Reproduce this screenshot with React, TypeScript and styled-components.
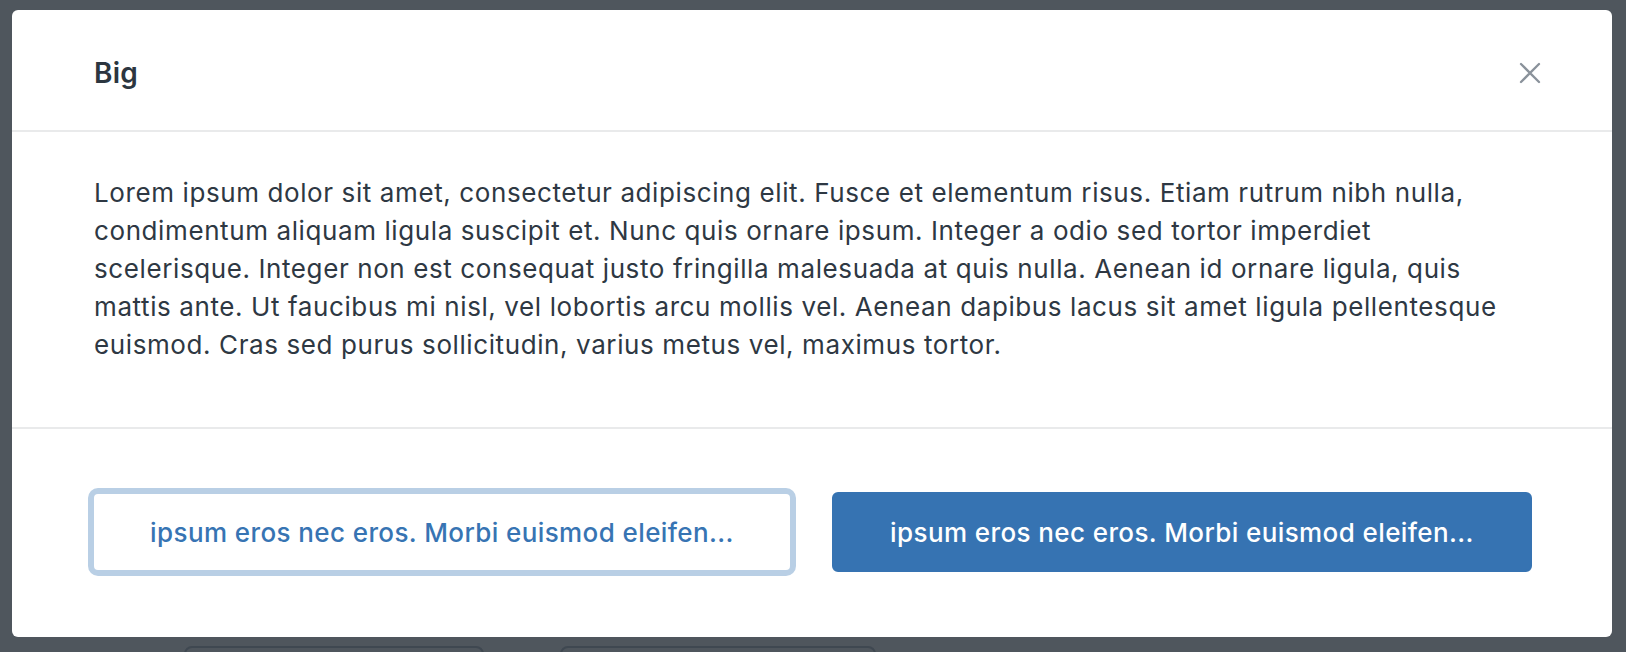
import React from "react";
import styled, { createGlobalStyle } from "styled-components";

const GlobalStyle = createGlobalStyle`
  html, body {
    margin: 0;
    padding: 0;
    background: #4f565d;
  }
  body {
    font-family: Inter, "Noto Sans", "Liberation Sans", sans-serif;
    -webkit-font-smoothing: antialiased;
  }
  * { box-sizing: border-box; }
`;

const Backdrop = styled.div`
  width: 1626px;
  height: 652px;
  overflow: hidden;
  padding: 10px 14px 0 12px;
  background: #4f565d;
`;

const Modal = styled.div`
  width: 1600px;
  background: #ffffff;
  border-radius: 6px;
  display: flex;
  flex-direction: column;
`;

const Header = styled.div`
  height: 122px;
  padding: 6px 62px 0 82px;
  display: flex;
  align-items: center;
  justify-content: space-between;
  border-bottom: 2px solid #e9eaeb;
`;

const Title = styled.h2`
  margin: 0;
  font-size: 28px;
  font-weight: 600;
  line-height: 38px;
  color: #2c3640;
  letter-spacing: 0.2px;
`;

const CloseButton = styled.button`
  width: 40px;
  height: 40px;
  padding: 0;
  border: none;
  background: transparent;
  display: flex;
  align-items: center;
  justify-content: center;
  cursor: pointer;
`;

const Body = styled.div`
  padding: 42px 20px 63px 82px;
  border-bottom: 2px solid #e9eaeb;
`;

const Paragraph = styled.p`
  margin: 0;
  font-size: 26px;
  line-height: 38px;
  color: #2e3843;
  letter-spacing: 0.6px;
  white-space: nowrap;
`;

const Footer = styled.div`
  display: grid;
  grid-template-columns: 1fr 1fr;
  gap: 40px;
  padding: 63px 80px 65px;
`;

const Button = styled.button<{ $variant: "outline" | "primary" }>`
  height: 80px;
  border-radius: 6px;
  font-family: Inter, "Noto Sans", "Liberation Sans", sans-serif;
  font-size: 26px;
  font-weight: 500;
  letter-spacing: 0.4px;
  white-space: nowrap;
  overflow: hidden;
  text-overflow: ellipsis;
  padding: 0 30px;
  cursor: pointer;
  border: 2px solid ${(p) => (p.$variant === "primary" ? "#3673b2" : "#b9cfe5")};
  background: ${(p) => (p.$variant === "primary" ? "#3673b2" : "#ffffff")};
  color: ${(p) => (p.$variant === "primary" ? "#ffffff" : "#3774b3")};
  box-shadow: ${(p) => (p.$variant === "outline" ? "0 0 0 4px #b9cfe5" : "none")};
`;

const GhostRow = styled.div`
  display: flex;
  gap: 76px;
  margin-top: 9px;
  padding-left: 172px;
`;

const Ghost = styled.div<{ $w: number }>`
  width: ${(p) => p.$w}px;
  height: 40px;
  border: 2px solid #3f4851;
  border-radius: 8px;
`;

const CloseIcon = () => (
  <svg width="22" height="22" viewBox="0 0 22 22" fill="none">
    <path d="M2 2L20 20M20 2L2 20" stroke="#8a929b" strokeWidth="2.3" strokeLinecap="round" />
  </svg>
);

const lines = [
  "Lorem ipsum dolor sit amet, consectetur adipiscing elit. Fusce et elementum risus. Etiam rutrum nibh nulla,",
  "condimentum aliquam ligula suscipit et. Nunc quis ornare ipsum. Integer a odio sed tortor imperdiet",
  "scelerisque. Integer non est consequat justo fringilla malesuada at quis nulla. Aenean id ornare ligula, quis",
  "mattis ante. Ut faucibus mi nisl, vel lobortis arcu mollis vel. Aenean dapibus lacus sit amet ligula pellentesque",
  "euismod. Cras sed purus sollicitudin, varius metus vel, maximus tortor.",
];

export default function App() {
  return (
    <>
      <GlobalStyle />
      <Backdrop>
        <Modal>
          <Header>
            <Title>Big</Title>
            <CloseButton aria-label="Close">
              <CloseIcon />
            </CloseButton>
          </Header>
          <Body>
            <Paragraph>
              {lines.map((l, i) => (
                <React.Fragment key={i}>
                  {l}
                  {i < lines.length - 1 && <br />}
                </React.Fragment>
              ))}
            </Paragraph>
          </Body>
          <Footer>
            <Button $variant="outline">ipsum eros nec eros. Morbi euismod eleifen...</Button>
            <Button $variant="primary">ipsum eros nec eros. Morbi euismod eleifen...</Button>
          </Footer>
        </Modal>
        <GhostRow>
          <Ghost $w={300} />
          <Ghost $w={316} />
        </GhostRow>
      </Backdrop>
    </>
  );
}
